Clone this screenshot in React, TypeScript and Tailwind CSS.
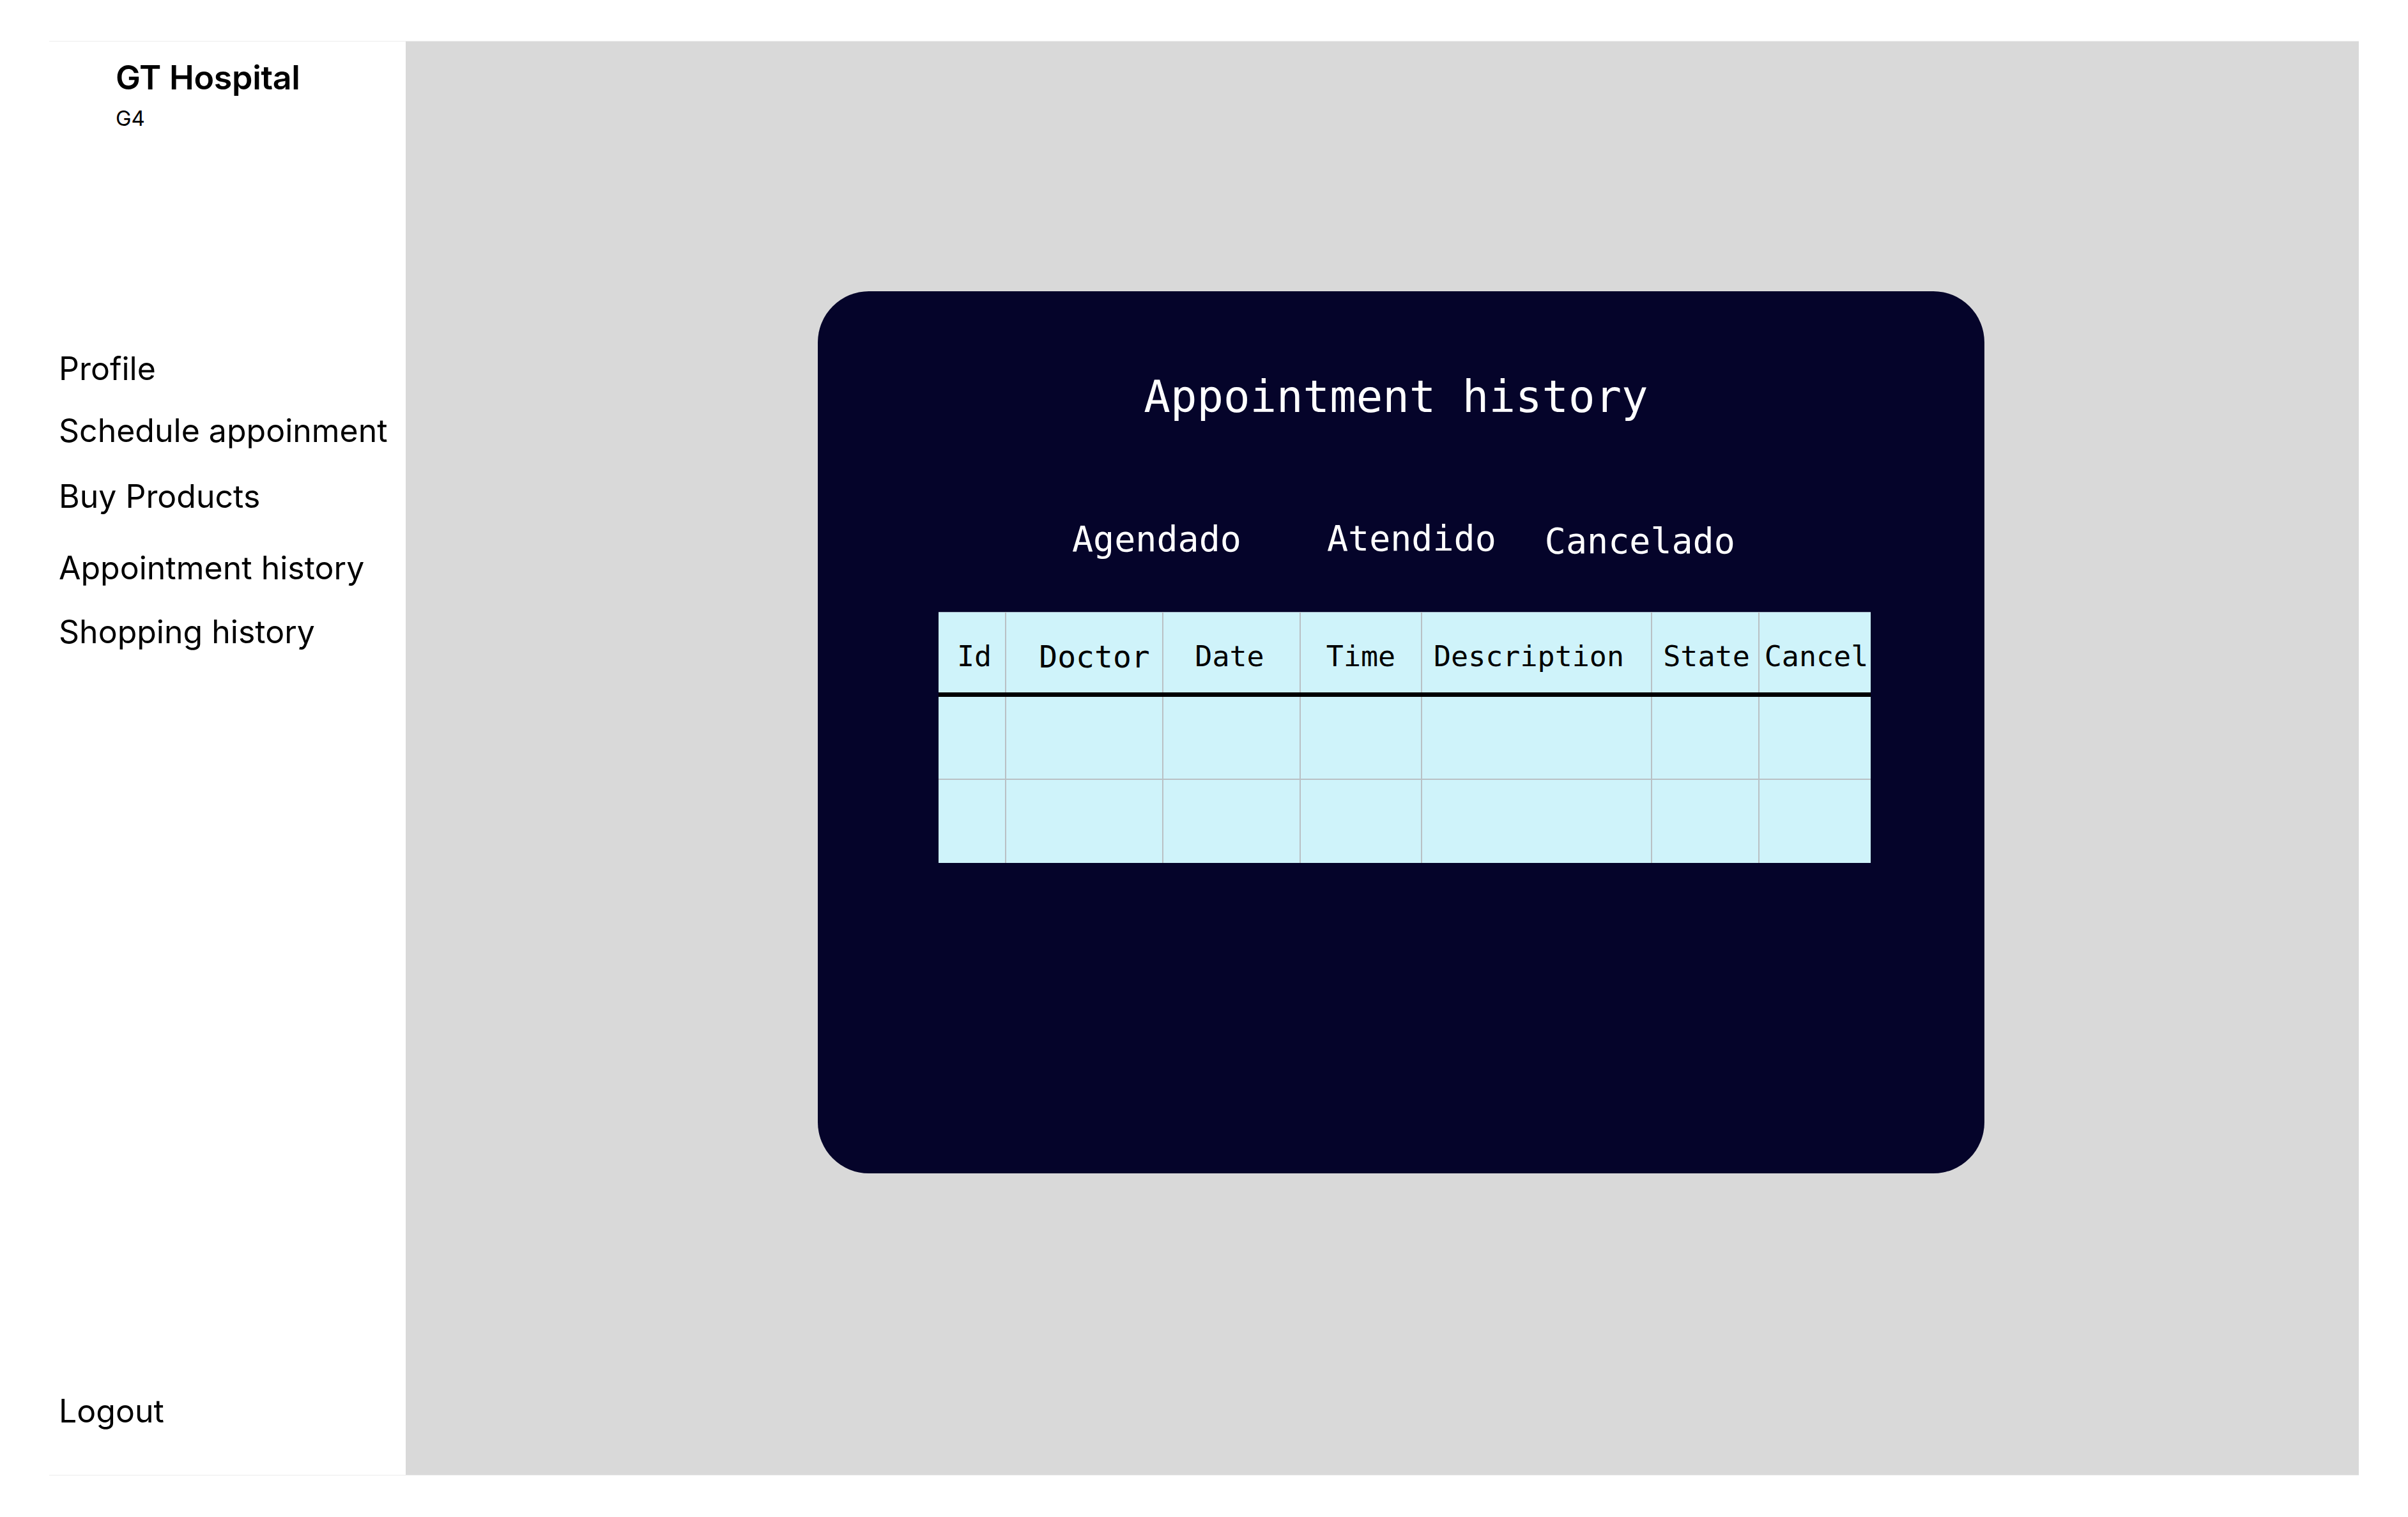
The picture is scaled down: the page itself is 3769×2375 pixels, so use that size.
import React from "react";

const navFont = { fontFamily: "Inter, 'Noto Sans', sans-serif" } as const;
const monoFont = { fontFamily: "'DejaVu Sans Mono', 'Liberation Mono', monospace" } as const;

export default function App() {
  const cols = [
    { label: "Id", w: "w-[105px]", size: "text-[45px]", shift: "left-[4px]" },
    { label: "Doctor", w: "w-[246px]", size: "text-[48px]", shift: "left-[16px]" },
    { label: "Date", w: "w-[215px]", size: "text-[45px]", shift: "-left-[3px]" },
    { label: "Time", w: "w-[190px]", size: "text-[45px]", shift: "" },
    { label: "Description", w: "w-[360px]", size: "text-[45px]", shift: "-left-[12px]" },
    { label: "State", w: "w-[168px]", size: "text-[45px]", shift: "left-[2px]" },
    { label: "Cancel", w: "w-[175px]", size: "text-[45px]", shift: "left-[2px]" },
  ];
  return (
    <div className="w-[3769px] h-[2375px] bg-white pt-[64px] pl-[77px]">
      <div className="flex w-[3615px] h-[2246px] border-y border-[#ececec]">
        {/* Sidebar */}
        <aside className="w-[558px] h-full bg-white flex flex-col text-black" style={navFont}>
          <div className="pl-[104px] pt-[25px]">
            <div className="text-[52px] leading-[64px] font-semibold tracking-[-0.3px]">GT Hospital</div>
            <div className="text-[33px] leading-[40px] mt-[11px]">G4</div>
          </div>
          <nav className="pl-[15px] flex flex-col text-[50px] leading-[60px] mt-[342px]">
            <span>Profile</span>
            <span className="mt-[37px]">Schedule appoinment</span>
            <span className="mt-[43px]">Buy Products</span>
            <span className="mt-[52px]">Appointment history</span>
            <span className="mt-[40px]">Shopping history</span>
          </nav>
          <div className="pl-[15px] text-[50px] leading-[60px] mt-auto mb-[70px]">Logout</div>
        </aside>

        {/* Main */}
        <main className="flex-1 h-full bg-[#d9d9d9] pt-[391px] pl-[645px]">
          <div className="w-[1826px] h-[1381px] rounded-[80px] bg-[#05042a] text-white flex flex-col" style={monoFont}>
            <h1 className="text-[69px] leading-[69px] mt-[131px] text-center pr-[16px] font-normal">
              Appointment history
            </h1>
            <div className="flex items-start text-[55px] leading-[55px] mt-[161px] pl-[398px]">
              <span>Agendado</span>
              <span className="ml-[134px] -mt-[1px]">Atendido</span>
              <span className="ml-[76px] mt-[3px]">Cancelado</span>
            </div>
            <div className="mt-[83px] pl-[189px]">
              <table className="table-fixed border-collapse w-[1459px] bg-[#cff3fa] text-black border-t border-[#a9b8c6]">
                <thead>
                  <tr className="h-[129px] border-b-[7px] border-black">
                    {cols.map((c, i) => (
                      <th
                        key={c.label}
                        className={`${c.w} ${c.size} font-normal p-0 text-center align-middle whitespace-nowrap ${
                          i === 0 ? "" : "border-l-2 border-[#b9c0c4]"
                        }`}
                      >
                        <span className={`relative top-[6px] ${c.shift}`}>{c.label}</span>
                      </th>
                    ))}
                  </tr>
                </thead>
                <tbody>
                  <tr className="h-[132px] border-b-2 border-[#b9c0c4]">
                    {cols.map((c, i) => (
                      <td key={c.label} className={i === 0 ? "" : "border-l-2 border-[#b9c0c4]"} />
                    ))}
                  </tr>
                  <tr className="h-[131px]">
                    {cols.map((c, i) => (
                      <td key={c.label} className={i === 0 ? "" : "border-l-2 border-[#b9c0c4]"} />
                    ))}
                  </tr>
                </tbody>
              </table>
            </div>
          </div>
        </main>
      </div>
    </div>
  );
}
